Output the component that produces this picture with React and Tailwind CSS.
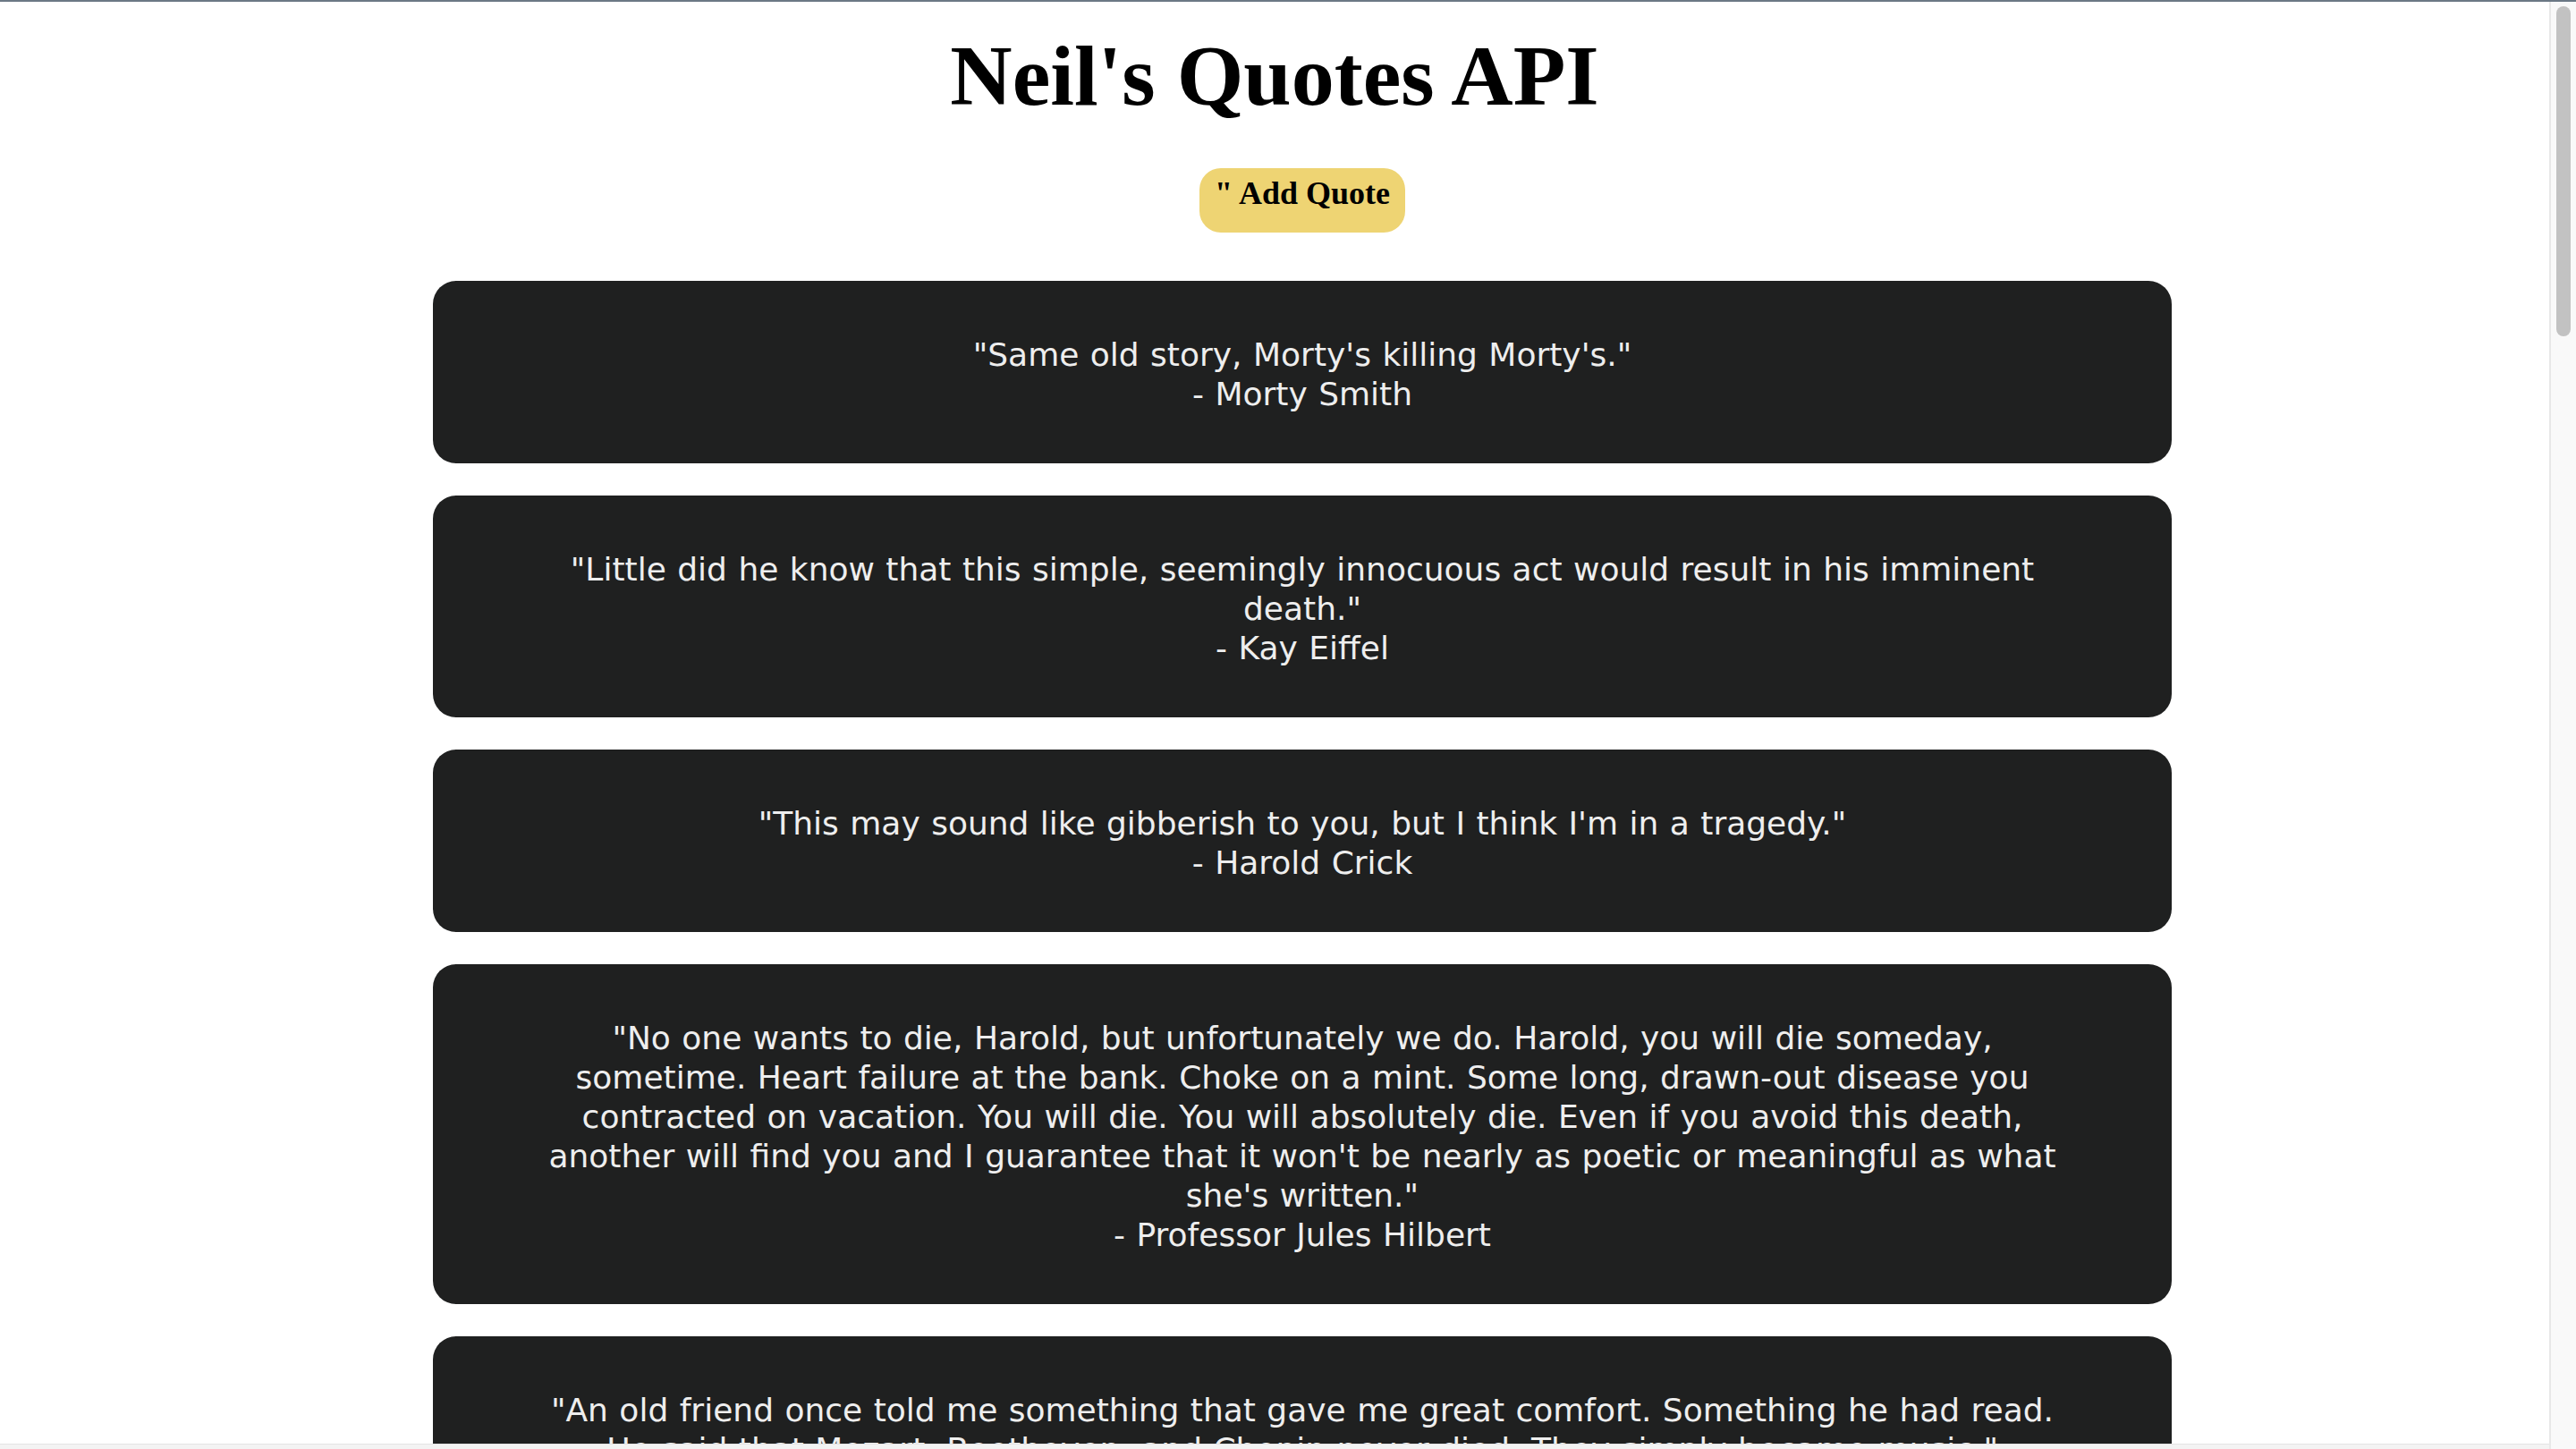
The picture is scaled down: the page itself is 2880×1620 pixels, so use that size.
import React from 'react';

const quotes = [
  { text: "Same old story, Morty's killing Morty's.", author: 'Morty Smith' },
  {
    text: 'Little did he know that this simple, seemingly innocuous act would result in his imminent death.',
    author: 'Kay Eiffel',
  },
  { text: "This may sound like gibberish to you, but I think I'm in a tragedy.", author: 'Harold Crick' },
  {
    text: "No one wants to die, Harold, but unfortunately we do. Harold, you will die someday, sometime. Heart failure at the bank. Choke on a mint. Some long, drawn-out disease you contracted on vacation. You will die. You will absolutely die. Even if you avoid this death, another will find you and I guarantee that it won't be nearly as poetic or meaningful as what she's written.",
    author: 'Professor Jules Hilbert',
  },
  {
    text: 'An old friend once told me something that gave me great comfort. Something he had read. He said that Mozart, Beethoven, and Chopin never died. They simply became music.',
    author: 'Dr. Jules Hilbert',
  },
];

const QuoteCard = ({ text, author }) => (
  <div className="rounded-[26px] bg-[#1f2020] px-[116px] pt-[61px] pb-[55px] text-center font-['DejaVu_Sans',Verdana,sans-serif] text-[36px] leading-[44px] text-[#eeeeee] [word-spacing:1px]">
    <p>"{text}"</p>
    <p>- {author}</p>
  </div>
);

export default function App() {
  return (
    <div className="flex h-[1620px] w-[2880px] overflow-hidden border-t-2 border-[#6b7885] bg-white">
      <div className="flex min-w-0 flex-1 flex-col">
        <main className="flex-1 overflow-hidden">
          <h1 className="mt-[28px] text-center font-['Liberation_Serif',serif] text-[96px] font-bold leading-[110px] text-black">
            Neil's Quotes API
          </h1>

          <div className="ml-[484px] flex w-[1944px] flex-col">
            <button className="mt-[48px] self-center rounded-[24px] bg-[#eed473] px-[17px] pt-[8px] pb-[23px] font-['Liberation_Serif',serif] text-[36px] font-bold leading-[41px] text-black">
              " Add Quote
            </button>

            <div className="mt-[54px] flex flex-col gap-[36px]">
              {quotes.map((q, i) => (
                <QuoteCard key={i} text={q.text} author={q.author} />
              ))}
            </div>
          </div>
        </main>
        <div className="h-[6px] border-t border-[#e4e4e4] bg-[#f3f3f3]" />
      </div>

      {/* scrollbar */}
      <div className="w-[30px] border-l-2 border-[#e8e8e8] bg-[#f9f9f9] pt-[5px] pl-[6px]">
        <div className="h-[369px] w-[16px] rounded-full bg-[#c2c2c2]" />
      </div>
    </div>
  );
}
